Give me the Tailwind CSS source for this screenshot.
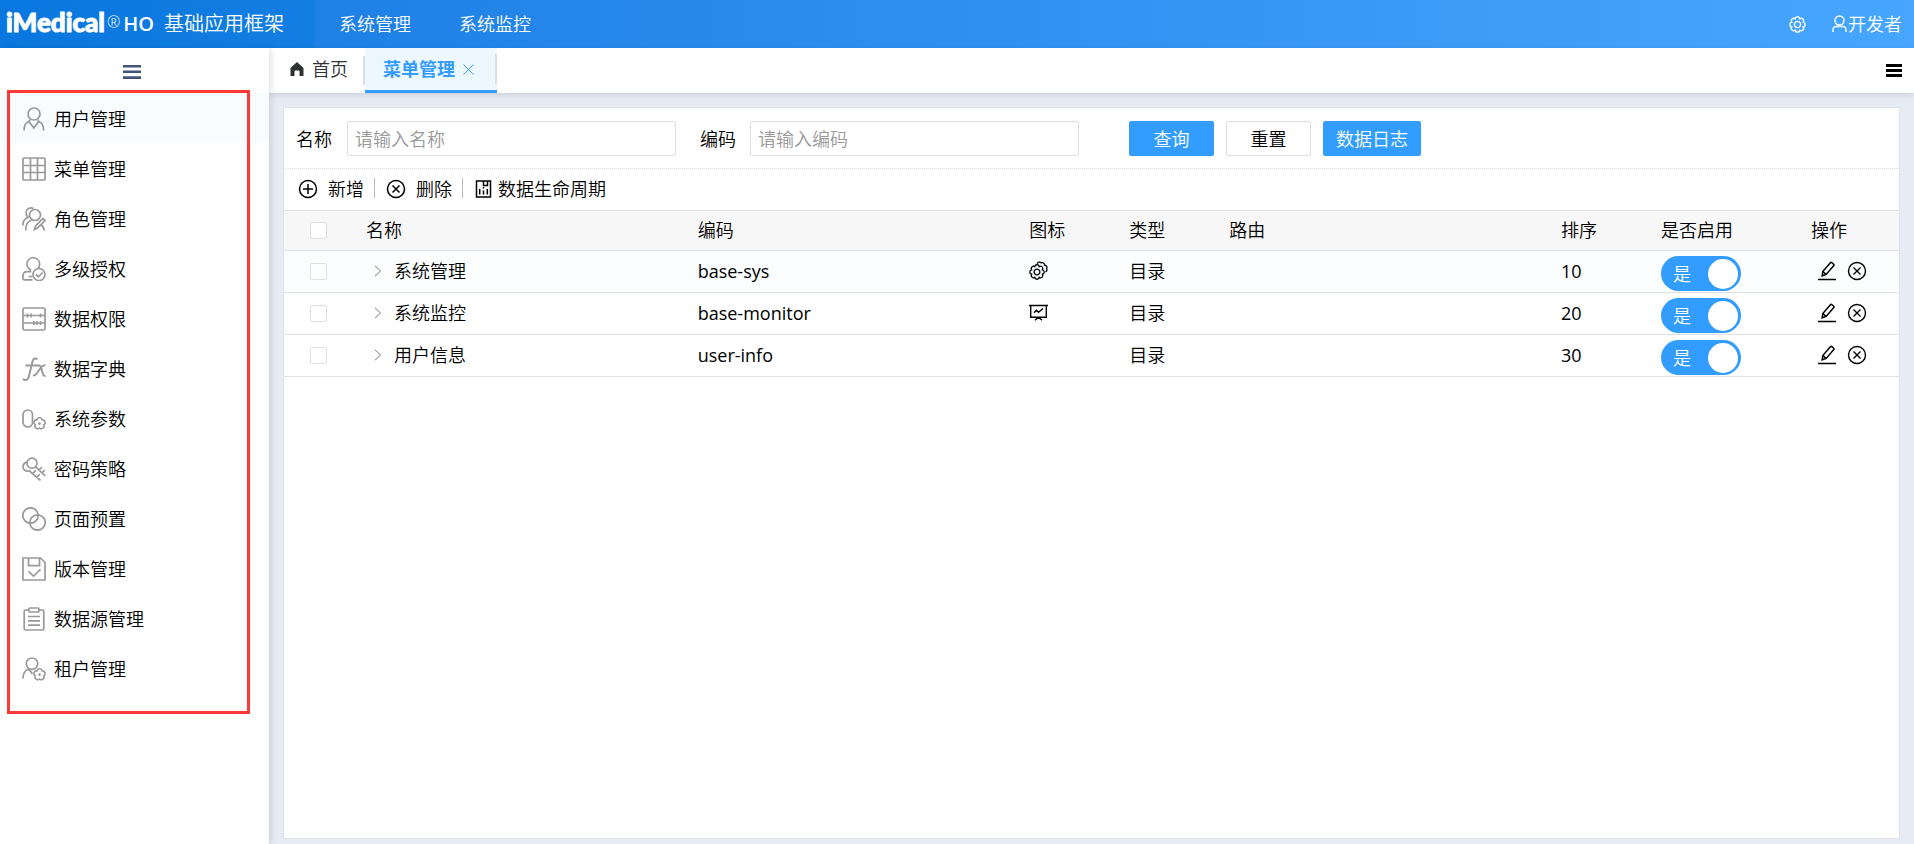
<!DOCTYPE html>
<html lang="zh-CN">
<head>
<meta charset="utf-8">
<meta name="viewport" content="width=device-width, initial-scale=1">
<title>菜单管理</title>
<script src="https://cdn.jsdelivr.net/npm/@tailwindcss/browser@4"></script>
</head>
<body class="flex min-h-screen flex-col bg-[#e7ebf4] font-['Open_Sans','Noto_Sans_CJK_SC',sans-serif] text-[18px] leading-6 font-[350] text-black">

<svg class="hidden" aria-hidden="true">
  <symbol id="gear8" viewBox="-8 -8 16 16"><path d="M5.360-2.220A2.250 2.250 0 0 1 5.360 2.220 2.250 2.250 0 0 1 2.220 5.360 2.250 2.250 0 0 1-2.220 5.360 2.250 2.250 0 0 1-5.360 2.220 2.250 2.250 0 0 1-5.360-2.220 2.250 2.250 0 0 1-2.220-5.360 2.250 2.250 0 0 1 2.220-5.360 2.250 2.250 0 0 1 5.360-2.220Z"/><circle r="2.900"/></symbol>
  <symbol id="flower" viewBox="-6 -6 12 12"><path d="M2.100-2.900A2.150 2.150 0 0 1 3.400 1.100 2.150 2.150 0 0 1 0 3.600 2.150 2.150 0 0 1-3.400 1.100 2.150 2.150 0 0 1-2.100-2.900 2.150 2.150 0 0 1 2.100-2.900Z" stroke-width="1.300"/><circle r=".6" stroke-width="1"/></symbol>
  <symbol id="circle-x" viewBox="0 0 20 20"><circle cx="10" cy="10" r="8.500"/><path d="m6.500 6.500 7 7m0-7-7 7"/></symbol>
  <symbol id="edit" viewBox="0 0 20 20"><path d="M1 18.500h18M5.200 14.800l.6-4.300 7.600-8.800a1 1 0 0 1 1.400-.1l1.900 1.600a1 1 0 0 1 .1 1.400l-7.600 8.800ZM5.800 10.500l3.400 2.900"/></symbol>
  <symbol id="chevron" viewBox="0 0 8 12"><path d="m1 .8 5.500 5.200L1 11.200"/></symbol>
</svg>

<header class="flex h-12 items-center bg-linear-to-r from-[#1479e0] to-[#46a6ff] text-white">
  <div class="flex h-full w-[315px] shrink-0 items-center bg-linear-to-r from-[#0877df] to-[#137ee3] pb-1 pl-[6px]">
    <span class="font-['Lato'] text-[26px] leading-6 font-black [-webkit-text-stroke:1px_white]">iMedical</span>
    <span class="ml-0.5 font-['Open_Sans'] text-[16px] leading-6">®</span>
    <span class="ml-[3px] pt-1 font-['Open_Sans'] text-[20px] leading-6 font-semibold">HO</span>
    <span class="ml-[10px] pt-1 text-[20px] leading-6">基础应用框架</span>
  </div>
  <nav class="flex">
    <a href="#" class="px-6">系统管理</a>
    <a href="#" class="px-6">系统监控</a>
  </nav>
  <div class="ml-auto flex items-center gap-[26px] pr-3">
    <button type="button" aria-label="设置"><svg class="size-[17px] fill-none stroke-white stroke-[1.300px]"><use href="#gear8"/></svg></button>
    <button type="button" class="flex items-center gap-px">
      <svg class="h-[18px] w-[15px] fill-none stroke-white stroke-[1.400px]" viewBox="0 0 15 18"><circle cx="7.500" cy="5.500" r="4.500"/><path d="M1 17v-2.500a3 3 0 0 1 3-3h7a3 3 0 0 1 3 3V17"/></svg>
      开发者
    </button>
  </div>
</header>

<div class="flex grow">
  <aside class="relative z-10 w-[269px] shrink-0 bg-white shadow-[2px_0_6px_rgba(0,0,0,0.12)]">
    <button type="button" aria-label="折叠菜单" class="flex h-[45px] w-full items-center justify-center pt-[3px] pr-[5px]">
      <svg class="h-[14px] w-[18px] fill-[#42547a]" viewBox="0 0 18 14"><path d="M0 0h18v2.500H0zM0 5.500h18V8H0zM0 11.300h18V14H0z"/></svg>
    </button>
    <ul class="[&_a]:flex [&_a]:h-[50px] [&_a]:items-center [&_a]:gap-2 [&_a]:pt-0.5 [&_a]:pl-[22px] [&_svg]:size-6 [&_svg]:fill-none [&_svg]:stroke-[#999] [&_svg]:stroke-[1.700px]">
      <li><a href="#" class="bg-[#f8fcff]"><svg viewBox="0 0 24 24"><circle cx="12" cy="7" r="6"/><path d="M2 23.500c0-4.500 1.600-8 5-9l4.800 6.500 4.800-6.500c3.400 1 5 4.500 5 9M8 12.500l-1 2M16 12.500l.6 2"/></svg>用户管理</a></li>
      <li><a href="#"><svg viewBox="0 0 24 24"><rect x="1" y="1" width="22" height="22" rx="1"/><path d="M8.500 1v22M15.500 1v22M1 8.500h22M1 15.500h22"/></svg>菜单管理</a></li>
      <li><a href="#"><svg viewBox="0 0 24 24"><circle cx="13" cy="8" r="5.500"/><path d="M11.500 1.600A5 5 0 0 0 4 5.500c0 2.200.8 3.800 2.200 4.700C2.800 11.500.8 14.500.8 18.500M9.500 13c-3.600 1-5.800 5-5.800 10.500M12.500 22.500l1-3.500 7.500-7.500 2 2-7.500 7.500ZM18.800 17.500c1.600.9 3 3 3.500 6"/></svg>角色管理</a></li>
      <li><a href="#"><svg viewBox="0 0 24 24"><path d="M10.500 22.800H2.200A1.200 1.200 0 0 1 1 21.600v-3.300c0-2.200 1.600-3.700 4-3.700h3.300v-2A6.300 6.300 0 1 1 17.500 8c-.2 1.500-.6 2.400-1.200 3.200M6.500 19.500h4"/><circle cx="17" cy="17.500" r="6"/><path d="m14 17.300 2.400 2.500 4.300-4.300"/></svg>多级授权</a></li>
      <li><a href="#"><svg viewBox="0 0 24 24"><rect x="1" y="1" width="22" height="22" rx="1.500"/><path d="M1 8.500h22M1 16h22M5.500 6.500v4M9 6.500v4M18.500 6.500v4M12 14v4M15 14v4M18.500 14v4"/></svg>数据权限</a></li>
      <li><a href="#"><svg viewBox="0 0 24 24"><path class="stroke-2" d="M15.500 2.200c-2.500-1.600-4.300-.6-5 2.300L6.800 19.800C6 23 4 23.500.8 22.300M3.500 8.500h13.500c1 0 1.500.5 1.900 1.500l2.200 7.500c.4 1.200 1.200 1.600 2.500 1.200M23.500 8.300c-2-.5-3 .2-4.500 2.200l-4 5.500c-1.500 2.200-2.200 2.800-4 2.300"/></svg>数据字典</a></li>
      <li><a href="#"><svg viewBox="0 0 24 24"><rect x="1" y="3" width="9.500" height="17" rx="4.700"/><use href="#flower" x="10" y="9" width="15" height="15"/></svg>系统参数</a></li>
      <li><a href="#"><svg viewBox="0 0 24 24"><circle cx="10" cy="6.200" r="5"/><path d="m13.600 9.800 9.600 9M17 13l3-3M20 15.800l2.700-2.700M5 5.200A4.800 4.800 0 0 0 1 9.300c-.4 3.400 3 5.800 6.300 4.500L18.500 23.500M10.500 16.700l3.500-3.400M14.500 20.300l3.300-3.200"/></svg>密码策略</a></li>
      <li><a href="#"><svg viewBox="0 0 24 24"><circle cx="8.500" cy="8.500" r="7.700"/><circle cx="15.500" cy="15.500" r="7.700"/></svg>页面预置</a></li>
      <li><a href="#"><svg viewBox="0 0 24 24"><path d="M1 1h17.500L23 5.500V23H1ZM6.500 1v7.700h11V1M6.500 14.300l5 4.700 7-6.700"/></svg>版本管理</a></li>
      <li><a href="#"><svg viewBox="0 0 24 24"><path d="M7 3H3.500A1.300 1.300 0 0 0 2.200 4.300v17.400A1.300 1.300 0 0 0 3.500 23h17a1.300 1.300 0 0 0 1.300-1.300V4.300A1.300 1.300 0 0 0 20.500 3H17M6 9.500h12M6 13.800h12M6 18.200h12"/><rect x="7" y="1" width="10" height="4" rx="1"/></svg>数据源管理</a></li>
      <li><a href="#"><svg viewBox="0 0 24 24"><circle cx="10" cy="6.700" r="5.700"/><path d="M.9 21.500c.2-4.700 1.900-8 5.100-9.300 2.300 1.600 3.500 2.800 4.300 4.600"/><use href="#flower" x="10" y="10" width="15" height="15"/></svg>租户管理</a></li>
    </ul>
    <div class="pointer-events-none absolute top-[42px] left-[7px] h-[624px] w-[243px] border-3 border-[#ff3838]"></div>
  </aside>

  <div class="flex min-w-0 grow flex-col">
    <div class="flex h-[45px] items-stretch bg-white shadow-[0_2px_6px_rgba(0,0,0,0.12)]">
      <a href="#" class="flex items-center gap-2 pr-[15px] pb-[3px] pl-[21px] text-[#303133]"><svg class="h-[14px] w-[14px] fill-[#303133]" viewBox="0 0 14 14"><path d="M7 0 .5 6v7.500a.5.500 0 0 0 .5.500h3.500V9.500a1 1 0 0 1 1-1h3a1 1 0 0 1 1 1V14H13a.5.500 0 0 0 .5-.5V6Z"/></svg>首页</a>
      <div class="my-2 w-0.5 bg-[#dcdfe2]"></div>
      <div class="flex items-center gap-2 border-b-3 border-[#339dff] bg-[#ecf7ff] pl-[18px] text-[#339dff]">
        <a href="#" class="font-bold">菜单管理</a>
        <button type="button" aria-label="关闭"><svg class="size-[11px] fill-none stroke-[#339dff]" viewBox="0 0 11 11"><path d="m.5.500 10 10m0-10-10 10"/></svg></button>
        <span class="ml-[13px] h-[30px] w-0.5 bg-[#dcdfe2]"></span>
      </div>
      <button type="button" aria-label="标签列表" class="ml-auto pr-3"><svg class="h-[13px] w-4 fill-black" viewBox="0 0 16 13"><path d="M0 0h16v3H0zM0 5h16v3H0zM0 10h16v3H0z"/></svg></button>
    </div>

    <main class="mx-[14px] mt-[14px] mb-[5px] flex grow flex-col border border-[#dfe2e6] bg-white">
      <form class="flex h-[61px] items-center border-b border-dotted border-[#dcdfe2] px-3 pt-px">
        <label for="f-name" class="mr-[15px] shrink-0">名称</label>
        <input id="f-name" type="text" placeholder="请输入名称" class="h-[35px] w-[329px] min-w-0 rounded-xs border border-[#dcdfe6] px-[7px] placeholder:text-[#999]">
        <label for="f-code" class="mr-[14px] ml-6 shrink-0">编码</label>
        <input id="f-code" type="text" placeholder="请输入编码" class="h-[35px] w-[329px] min-w-0 rounded-xs border border-[#dcdfe6] px-[7px] placeholder:text-[#999]">
        <div class="ml-[50px] flex shrink-0 gap-3">
          <button type="button" class="h-[35px] w-[85px] rounded-xs bg-[#339dff] text-white">查询</button>
          <button type="button" class="h-[35px] w-[85px] rounded-xs border border-[#dcdfe6] bg-white">重置</button>
          <button type="button" class="h-[35px] w-[98px] rounded-xs bg-[#339dff] text-white">数据日志</button>
        </div>
      </form>

      <div class="flex h-[41px] items-center pb-0.5 pl-[14px]">
        <button type="button" class="flex items-center gap-[10px]"><svg class="size-5 fill-none stroke-black stroke-[1.500px]" viewBox="0 0 20 20"><circle cx="10" cy="10" r="8.500"/><path d="M10 5v10M5 10h10"/></svg>新增</button>
        <span class="mr-[11px] mb-0.5 ml-[10px] h-5 w-px bg-[#bbb]"></span>
        <button type="button" class="flex items-center gap-[10px]"><svg class="size-5 fill-none stroke-black stroke-[1.500px]"><use href="#circle-x"/></svg>删除</button>
        <span class="mr-3 mb-0.5 ml-[10px] h-5 w-px bg-[#bbb]"></span>
        <button type="button" class="flex items-center gap-[6px]"><svg class="h-[18px] w-[17px] fill-none stroke-black stroke-[1.500px]" viewBox="0 0 17 18"><rect x="1.500" y="1" width="14" height="16"/><path d="M4.700 9v5.500M8.500 7v1.500M8.500 10.500v4M12.300 9v5.500M8.500 1v4.500h4V1"/></svg>数据生命周期</button>
      </div>

      <table class="w-full table-fixed border-t border-[#dfe1e4] text-left [&_td]:pt-0 [&_td]:pr-0 [&_td]:pb-0.5 [&_td]:pl-3 [&_th]:pb-0.5 [&_th]:pl-3 [&_th]:font-[350] [&_tr]:border-b [&_tr]:border-[#dfe1e4]">
        <colgroup><col class="w-[70px]"><col><col><col class="w-[100px]"><col class="w-[100px]"><col><col class="w-[100px]"><col class="w-[150px]"><col class="w-[100px]"></colgroup>
        <thead>
          <tr class="h-10 bg-[#f7f7f7]">
            <th><input type="checkbox" aria-label="全选" class="mt-0.5 ml-[14px] block size-[17px] appearance-none rounded-xs border border-[#dcdfe6] bg-white"></th>
            <th>名称</th><th>编码</th><th>图标</th><th>类型</th><th>路由</th><th>排序</th><th>是否启用</th><th>操作</th>
          </tr>
        </thead>
        <tbody>
          <tr class="h-[42px] bg-[#fbfdff]">
            <td><input type="checkbox" aria-label="选择系统管理" class="mt-0.5 ml-[14px] block size-[17px] appearance-none rounded-xs border border-[#dcdfe6] bg-white"></td>
            <td><div class="flex items-center gap-3 pl-2"><button type="button" aria-label="展开"><svg class="h-3 w-2 fill-none stroke-[#777]"><use href="#chevron"/></svg></button>系统管理</div></td>
            <td class="font-normal">base-sys</td>
            <td><svg class="size-[19px] fill-none stroke-black stroke-[1.300px]" viewBox="0 0 19 19"><use href="#gear8" x="0" y="3" width="16" height="16"/><path d="M8 2.600C9.300.9 11 .7 12.200 1.800c1.800-.7 3.300.3 3.300 2.200 2 .5 3 2 2.100 3.600.8 1.500.2 2.700-1.100 3.200"/></svg></td>
            <td>目录</td><td></td><td class="font-normal">10</td>
            <td class="pb-0!"><label class="mt-1 flex h-[35px] w-20 items-center justify-between rounded-full bg-[#339dff] pr-[3px] pl-3 text-white"><input type="checkbox" role="switch" checked class="sr-only"><span class="leading-6">是</span><span class="size-[30px] rounded-full bg-white"></span></label></td>
            <td><div class="flex gap-[10px] pl-[6px]"><button type="button" aria-label="编辑"><svg class="size-5 fill-none stroke-black stroke-[1.500px]"><use href="#edit"/></svg></button><button type="button" aria-label="删除"><svg class="size-5 fill-none stroke-black stroke-[1.400px]"><use href="#circle-x"/></svg></button></div></td>
          </tr>
          <tr class="h-[42px]">
            <td><input type="checkbox" aria-label="选择系统监控" class="mt-0.5 ml-[14px] block size-[17px] appearance-none rounded-xs border border-[#dcdfe6] bg-white"></td>
            <td><div class="flex items-center gap-3 pl-2"><button type="button" aria-label="展开"><svg class="h-3 w-2 fill-none stroke-[#777]"><use href="#chevron"/></svg></button>系统监控</div></td>
            <td class="font-normal">base-monitor</td>
            <td><svg class="size-[19px] fill-none stroke-black stroke-[1.400px]" viewBox="0 0 19 19"><path d="M0 2.500h19M1.700 2.500v11.700h15.600V2.500M9.500 14.200l-3.500 3M9.500 14.200l3.500 3M5 9.700 7.500 7.200l2 2L14 5.500"/></svg></td>
            <td>目录</td><td></td><td class="font-normal">20</td>
            <td class="pb-0!"><label class="mt-1 flex h-[35px] w-20 items-center justify-between rounded-full bg-[#339dff] pr-[3px] pl-3 text-white"><input type="checkbox" role="switch" checked class="sr-only"><span class="leading-6">是</span><span class="size-[30px] rounded-full bg-white"></span></label></td>
            <td><div class="flex gap-[10px] pl-[6px]"><button type="button" aria-label="编辑"><svg class="size-5 fill-none stroke-black stroke-[1.500px]"><use href="#edit"/></svg></button><button type="button" aria-label="删除"><svg class="size-5 fill-none stroke-black stroke-[1.400px]"><use href="#circle-x"/></svg></button></div></td>
          </tr>
          <tr class="h-[42px]">
            <td><input type="checkbox" aria-label="选择用户信息" class="mt-0.5 ml-[14px] block size-[17px] appearance-none rounded-xs border border-[#dcdfe6] bg-white"></td>
            <td><div class="flex items-center gap-3 pl-2"><button type="button" aria-label="展开"><svg class="h-3 w-2 fill-none stroke-[#777]"><use href="#chevron"/></svg></button>用户信息</div></td>
            <td class="font-normal">user-info</td>
            <td></td>
            <td>目录</td><td></td><td class="font-normal">30</td>
            <td class="pb-0!"><label class="mt-1 flex h-[35px] w-20 items-center justify-between rounded-full bg-[#339dff] pr-[3px] pl-3 text-white"><input type="checkbox" role="switch" checked class="sr-only"><span class="leading-6">是</span><span class="size-[30px] rounded-full bg-white"></span></label></td>
            <td><div class="flex gap-[10px] pl-[6px]"><button type="button" aria-label="编辑"><svg class="size-5 fill-none stroke-black stroke-[1.500px]"><use href="#edit"/></svg></button><button type="button" aria-label="删除"><svg class="size-5 fill-none stroke-black stroke-[1.400px]"><use href="#circle-x"/></svg></button></div></td>
          </tr>
        </tbody>
      </table>
    </main>
  </div>
</div>
</body>
</html>
